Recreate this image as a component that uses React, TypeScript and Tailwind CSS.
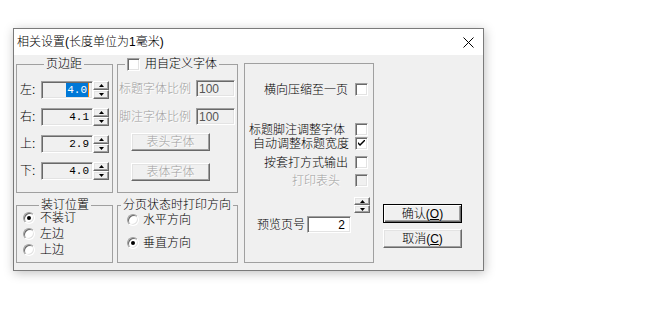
import React from "react";

const FONT = "font-['Liberation_Sans','Noto_Sans_CJK_SC',sans-serif] font-light";
const SUNKEN =
  "border border-t-[#a0a0a0] border-l-[#a0a0a0] border-b-white border-r-white shadow-[inset_1px_1px_0_#696969,inset_-1px_-1px_0_#e3e3e3]";
const RAISED =
  "border border-t-white border-l-white border-b-[#696969] border-r-[#696969] shadow-[inset_-1px_-1px_0_#a0a0a0,inset_1px_1px_0_#e3e3e3]";
const GREY = "text-[#a0a0a0] [text-shadow:1px_1px_0_#fff]";

function Arrow({ up }: { up?: boolean }) {
  return (
    <svg width="5" height="3" viewBox="0 0 5 3">
      <path d={up ? "M2.5 0 L5 3 L0 3 Z" : "M0 0 L5 0 L2.5 3 Z"} fill="#000" />
    </svg>
  );
}

function Spin({ h = 18 }: { h?: number }) {
  return (
    <div className={`flex w-[16px] flex-col ${h === 18 ? "h-[18px]" : "h-[16px]"}`}>
      <div className={`flex flex-1 items-center justify-center ${RAISED}`}>
        <Arrow up />
      </div>
      <div className={`flex flex-1 items-center justify-center ${RAISED}`}>
        <Arrow />
      </div>
    </div>
  );
}

function Check({ checked, disabled }: { checked?: boolean; disabled?: boolean }) {
  return (
    <div className={`flex h-[13px] w-[13px] shrink-0 items-center justify-center ${SUNKEN} ${disabled ? "bg-[#f0f0f0]" : "bg-white"}`}>
      {checked && (
        <svg width="7" height="7" viewBox="0 0 7 7">
          <path d="M0 2 L0 4 L2 6 L7 1 L7 -1 L2 4 Z" fill="#000" />
        </svg>
      )}
    </div>
  );
}

function Radio({ checked }: { checked?: boolean }) {
  return (
    <div className="flex h-[12px] w-[12px] shrink-0 items-center justify-center rounded-full border border-t-[#a0a0a0] border-l-[#a0a0a0] border-b-white border-r-white bg-white shadow-[inset_1px_1px_0_#696969,inset_-1px_-1px_0_#e3e3e3]">
      {checked && <div className="h-[4px] w-[4px] rounded-full bg-black" />}
    </div>
  );
}

function MarginRow({ label, value, selected }: { label: string; value: string; selected?: boolean }) {
  return (
    <div className="flex h-[18px] items-center">
      <span className="w-[21px]">{label}:</span>
      <div className={`flex h-[18px] w-[52px] items-center justify-end bg-[#f0f0f0] pr-[3px] font-['Liberation_Mono',monospace] text-[11px] font-normal ${SUNKEN}`}>
        {selected ? (
          <>
            <span className="bg-[#0078d7] px-[1px] text-white">{value}</span>
            <span className="h-[14px] w-[1px] bg-[#ff8800]" />
          </>
        ) : (
          value
        )}
      </div>
      <Spin />
    </div>
  );
}

export default function App() {
  return (
    <div className={`h-[311px] w-[671px] bg-white pl-[13px] pt-[28px] text-[12px] leading-[14px] text-black ${FONT}`}>
      <div className="flex h-[243px] w-[471px] flex-col border border-[#7a7a7a] bg-[#f0f0f0] shadow-[1px_2px_10px_rgba(0,0,0,0.25)]">
        <div className="flex h-[26px] items-center justify-between bg-white pl-[3px] pr-[9px]">
          <span className="text-[12px]">相关设置(长度单位为1毫米)</span>
          <svg width="11" height="11" viewBox="0 0 11 11">
            <path d="M0.5 0.5 L10.5 10.5 M10.5 0.5 L0.5 10.5" stroke="#000" strokeWidth="1" />
          </svg>
        </div>

        <div className="flex flex-1 pl-[2px] pt-[2px]">
          <div className="flex w-[222px] flex-col gap-[5px]">
            <div className="flex gap-[4px]">
              <fieldset className="h-[136px] w-[97px] border border-[#a0a0a0]">
                <legend className="ml-[27px] px-[2px] leading-[14px]">页边距</legend>
                <div className="flex flex-col gap-[9px] pl-[3px] pt-[10px]">
                  <MarginRow label="左" value="4.0" selected />
                  <MarginRow label="右" value="4.1" />
                  <MarginRow label="上" value="2.9" />
                  <MarginRow label="下" value="4.0" />
                </div>
              </fieldset>

              <fieldset className="h-[136px] w-[121px] border border-[#a0a0a0]">
                <legend className="ml-[7px] px-[2px] leading-[14px]">
                  <span className="flex items-center gap-[5px]">
                    <Check />
                    用自定义字体
                  </span>
                </legend>
                <div className="flex flex-col pl-[1px] pr-[2px] pt-[9px]">
                  <div className="flex h-[17px] items-center justify-between">
                    <span className={GREY}>标题字体比例</span>
                    <div className={`flex h-[17px] w-[39px] items-center bg-[#f0f0f0] pl-[2px] text-[#555] ${SUNKEN}`}>100</div>
                  </div>
                  <div className="mt-[11px] flex h-[17px] items-center justify-between">
                    <span className={GREY}>脚注字体比例</span>
                    <div className={`flex h-[17px] w-[39px] items-center bg-[#f0f0f0] pl-[2px] text-[#555] ${SUNKEN}`}>100</div>
                  </div>
                  <div className={`ml-[12px] mt-[8px] flex h-[18px] w-[79px] items-center justify-center ${RAISED} ${GREY}`}>表头字体</div>
                  <div className={`ml-[12px] mt-[12px] flex h-[18px] w-[79px] items-center justify-center ${RAISED} ${GREY}`}>表体字体</div>
                </div>
              </fieldset>
            </div>

            <div className="flex gap-[4px]">
              <fieldset className="h-[65px] w-[97px] border border-[#a0a0a0]">
                <legend className="ml-[22px] px-[2px] leading-[14px]">装订位置</legend>
                <div className="-mt-[2px] flex flex-col pl-[6px]">
                  {[
                    ["不装订", true],
                    ["左边", false],
                    ["上边", false],
                  ].map(([t, c]) => (
                    <div key={t as string} className="flex h-[16px] items-center gap-[5px]">
                      <Radio checked={c as boolean} />
                      {t}
                    </div>
                  ))}
                </div>
              </fieldset>
              <fieldset className="h-[65px] w-[121px] border border-[#a0a0a0]">
                <legend className="ml-[3px] px-[2px] leading-[14px]">分页状态时打印方向</legend>
                <div className="flex flex-col pl-[9px]">
                  <div className="flex h-[16px] items-center gap-[4px]">
                    <Radio />
                    水平方向
                  </div>
                  <div className="mt-[7px] flex h-[16px] items-center gap-[4px]">
                    <Radio checked />
                    垂直方向
                  </div>
                </div>
              </fieldset>
            </div>
          </div>

          <div className="ml-[6px] mt-[6px] flex h-[200px] w-[130px] flex-col items-end border border-[#a0a0a0] pt-[19px]">
            <div className="flex h-[13px] items-center pr-[5px]">
              <span className="mr-[7px]">横向压缩至一页</span>
              <Check />
            </div>
            <div className="mt-[27px] flex h-[13px] items-center pr-[5px]">
              <span className="mr-[10px]">标题脚注调整字体</span>
              <Check />
            </div>
            <div className="mt-[1px] flex h-[13px] items-center pr-[5px]">
              <span className="mr-[6px]">自动调整标题宽度</span>
              <Check checked />
            </div>
            <div className="mt-[6px] flex h-[13px] items-center pr-[5px]">
              <span className="mr-[7px]">按套打方式输出</span>
              <Check />
            </div>
            <div className="mt-[5px] flex h-[13px] items-center pr-[5px]">
              <span className={`mr-[15px] ${GREY}`}>打印表头</span>
              <Check disabled />
            </div>
            <div className="mr-[3px] mt-[10px]">
              <Spin h={16} />
            </div>
            <div className="mt-[3px] flex items-center gap-[2px] self-start pl-[12px]">
              <span>预览页号</span>
              <div className={`flex h-[17px] w-[44px] items-center justify-end bg-white pr-[5px] ${SUNKEN}`}>2</div>
            </div>
          </div>

          <div className="ml-[9px] flex flex-col gap-[6px] pt-[147px]">
            <div className="flex h-[19px] w-[79px] items-center justify-center border border-black shadow-[inset_1px_1px_0_#fff,inset_-1px_-1px_0_#696969,inset_-2px_-2px_0_#a0a0a0]">
              <span>
                确认(<span className="underline">O</span>)
              </span>
            </div>
            <div className={`flex h-[19px] w-[79px] items-center justify-center ${RAISED}`}>
              <span>
                取消(<span className="underline">C</span>)
              </span>
            </div>
          </div>
        </div>
      </div>
    </div>
  );
}
